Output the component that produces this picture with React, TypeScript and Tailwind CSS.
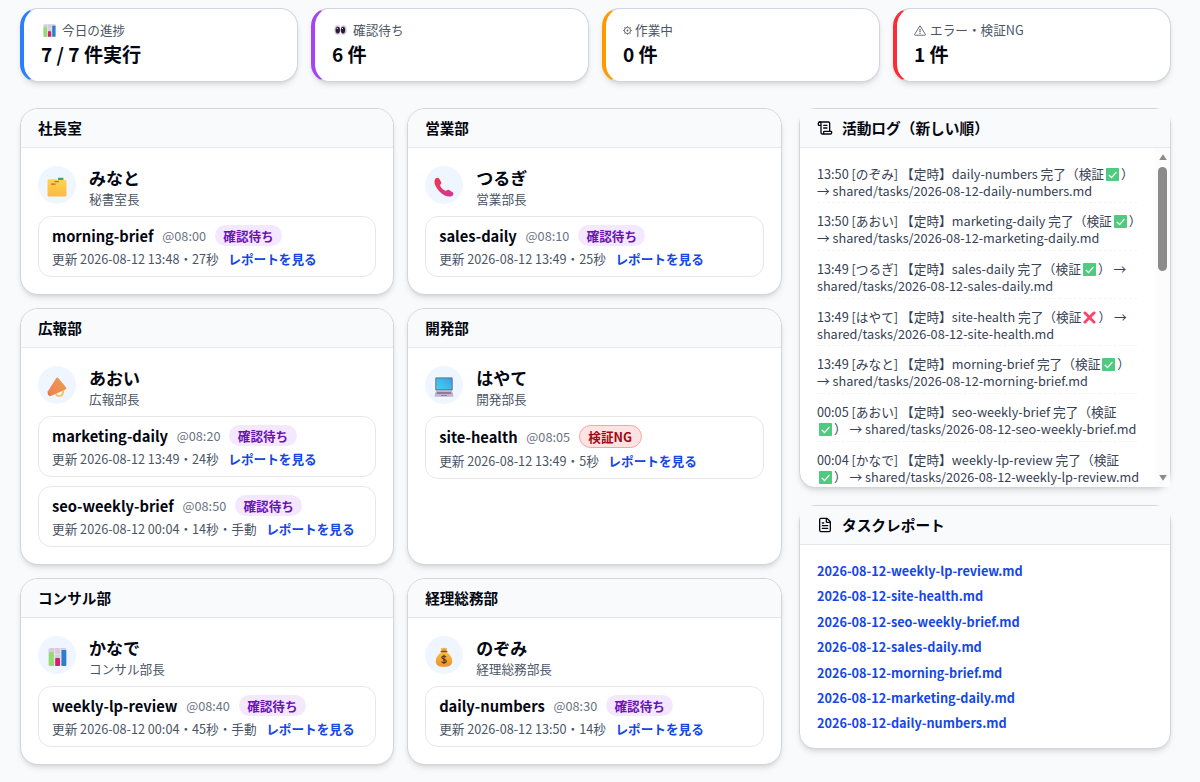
import type { ReactNode } from "react"
import { FileText, ScrollText } from "lucide-react"

type Task = {
  name: string
  time: string
  status: "wait" | "ng"
  meta: string
}

type Department = {
  title: string
  leader: string
  role: string
  icon: ReactNode
  tasks: Task[]
}

type Log = {
  time: string
  who: string
  task: string
  ok: boolean
  // where the entry wraps onto its second line
  wrap: "mark" | "arrow" | "path"
}

function ChartIcon({ className }: { className: string }) {
  return (
    <svg viewBox="0 0 20 20" className={className}>
      <rect x="0.5" y="0.5" width="19" height="19" rx="2" fill="#d5cbdc" />
      <path d="M0.5 7h19M0.5 13h19M7 0.5v19M13 0.5v19" stroke="#efe9f2" strokeWidth="0.8" />
      <rect x="1" y="5" width="5" height="14.5" rx="0.8" fill="#8ee06b" />
      <rect x="7.6" y="11" width="5" height="8.5" rx="0.8" fill="#d4216b" />
      <rect x="14.2" y="2.5" width="5" height="17" rx="0.8" fill="#2880cf" />
    </svg>
  )
}

function EyesIcon({ className }: { className: string }) {
  return (
    <svg viewBox="0 0 20 16" className={className}>
      <ellipse cx="5" cy="8" rx="4.9" ry="7.6" fill="#d3c6df" />
      <ellipse cx="15" cy="8" rx="4.9" ry="7.6" fill="#d3c6df" />
      <ellipse cx="5.6" cy="8" rx="3.5" ry="5.4" fill="#2b1c35" />
      <ellipse cx="14" cy="8" rx="3.5" ry="5.4" fill="#2b1c35" />
      <circle cx="4.7" cy="5.4" r="0.9" fill="#fff" />
      <circle cx="13.1" cy="5.4" r="0.9" fill="#fff" />
    </svg>
  )
}

function GearIcon() {
  return (
    <svg viewBox="0 0 16 16" className="h-[9px] w-[9px]" fill="none" stroke="#4b5563">
      <circle cx="8" cy="8" r="5.6" strokeWidth="1.6" />
      <circle cx="8" cy="8" r="1.6" fill="#4b5563" stroke="none" />
      <path
        d="M8 0v2M8 14v2M0 8h2M14 8h2M2.3 2.3l1.4 1.4M12.3 12.3l1.4 1.4M2.3 13.7l1.4-1.4M12.3 3.7l1.4-1.4"
        strokeWidth="1.2"
      />
    </svg>
  )
}

function WarningIcon() {
  return (
    <svg viewBox="0 0 24 22" className="h-[11px] w-[12px]" fill="none" stroke="#4b5563" strokeWidth="1.7">
      <path d="M12 1.5 L23 19 Q23 20.5 21.5 20.5 H2.5 Q1 20.5 1 19 Z" strokeLinejoin="round" />
      <path d="M12 7.5v7M12 16v2" strokeWidth="2" />
    </svg>
  )
}

function FolderIcon() {
  return (
    <svg viewBox="0 0 20 20" className="h-[20px] w-[20px]">
      <defs>
        <linearGradient id="folder" x1="0" y1="0" x2="0" y2="1">
          <stop offset="0" stopColor="#ffd64a" />
          <stop offset="1" stopColor="#fbb845" />
        </linearGradient>
      </defs>
      <path d="M11 .8h5.4v2.6H11z" fill="#3aa774" />
      <path d="M0.5 4Q0.5 2.2 2 2.2H10L11 3H18Q19.5 3 19.5 4.4V18Q19.5 19.5 18 19.5H2Q0.5 19.5 0.5 18Z" fill="url(#folder)" />
      <path d="M4 7.2h4.5" stroke="#e8542f" strokeWidth="1.2" />
      <path d="M7.5 4.6h4.4" stroke="#4b9a8e" strokeWidth="1.2" />
    </svg>
  )
}

function PhoneIcon() {
  return (
    <svg viewBox="0 0 20 20" className="h-[20px] w-[20px]">
      <defs>
        <linearGradient id="phone" x1="0" y1="0" x2="1" y2="1">
          <stop offset="0" stopColor="#f0364f" />
          <stop offset="1" stopColor="#d0379a" />
        </linearGradient>
      </defs>
      <path
        d="M1.6 1.6C2.5.4 4.3.3 5.1 1.6L7.1 4.9C7.6 5.8 7.3 6.8 6.4 7.5C6 7.9 6 8.4 6.3 9C7.4 11 9 12.6 11.2 13.7C11.7 14 12.2 13.9 12.6 13.5C13.3 12.8 14.2 12.6 15 13.1L18.6 15.2C19.8 16 19.8 17.5 18.6 18.4C16.6 20 13.6 19.9 10.8 18.4C6.5 16.2 2.9 12.1 1.1 8C.1 5.6.2 3.2 1.6 1.6Z"
        fill="url(#phone)"
      />
    </svg>
  )
}

function MegaphoneIcon() {
  return (
    <svg viewBox="0 0 20 20" className="h-[20px] w-[20px]">
      <defs>
        <linearGradient id="mega" x1="0" y1="1" x2="1" y2="0">
          <stop offset="0" stopColor="#f57c55" />
          <stop offset="1" stopColor="#e9a04b" />
        </linearGradient>
      </defs>
      <path d="M9 16.4c1 3.4 5.8 3.6 7-.4l.2-2.4" fill="none" stroke="#f6c04f" strokeWidth="1.7" />
      <path d="M9.2 1.2Q10.3 0 11.4 1.2L19.2 10.6Q19.8 11.8 18.6 12.4L3.2 19.3Q.6 17.6.6 14.8Z" fill="url(#mega)" />
      <path d="M.8 14.4Q3 15.6 3.4 19.2L1.8 18.6Q.2 16.8.8 14.4Z" fill="#d97c35" />
    </svg>
  )
}

function LaptopIcon() {
  return (
    <svg viewBox="0 0 20 20" className="h-[20px] w-[20px]">
      <defs>
        <linearGradient id="screen" x1="0" y1="1" x2="1" y2="0">
          <stop offset="0" stopColor="#3fd5f2" />
          <stop offset="1" stopColor="#3d9fe5" />
        </linearGradient>
      </defs>
      <rect x="1.4" y="0.4" width="17.2" height="13" rx="1" fill="#57506b" />
      <rect x="2.2" y="1.2" width="15.6" height="11.4" rx="0.4" fill="url(#screen)" />
      <path d="M2 13.5h16l1.6 5.2Q19.6 19.8 18.6 19.8H1.4Q.4 19.8.4 18.7Z" fill="#c3b6cd" />
      <path d="M3 15h14l.6 2H2.4Z" fill="#8a7d9b" />
      <path d="M7 18h6v1H7z" fill="#8f829e" />
    </svg>
  )
}

function MoneyIcon() {
  return (
    <svg viewBox="0 0 20 20" className="h-[20px] w-[20px]">
      <defs>
        <linearGradient id="bag" x1="0" y1="0" x2="0" y2="1">
          <stop offset="0" stopColor="#fcc03c" />
          <stop offset="1" stopColor="#ee8f2d" />
        </linearGradient>
      </defs>
      <path d="M7 .8L8.6 1.4 10 .4 11.4 1.4 13 .8 12.4 4.2H7.6Z" fill="#f2a531" />
      <path d="M7.6 4.8H12.4C15.6 7 18.2 10.6 18.2 14.4C18.2 18 15.4 19.8 10 19.8S1.8 18 1.8 14.4C1.8 10.6 4.4 7 7.6 4.8Z" fill="url(#bag)" />
      <path d="M7.2 4.5h5.6" stroke="#8a4a28" strokeWidth="1.3" strokeLinecap="round" />
      <path
        d="M12.2 10.2C11.7 9.3 10.9 9 10 9C8.8 9 7.9 9.6 7.9 10.6C7.9 12.8 12.3 11.8 12.3 14.1C12.3 15.2 11.2 15.8 10 15.8C8.9 15.8 8 15.3 7.6 14.4M10 7.8V17"
        fill="none"
        stroke="#5d3426"
        strokeWidth="1.2"
      />
    </svg>
  )
}

function ResultMark({ ok }: { ok: boolean }) {
  return (
    <span className="inline-flex h-[13px] w-[17px] items-center justify-center align-[-2px]">
      {ok ? (
        <svg viewBox="0 0 14 14" className="h-[13px] w-[13px]">
          <rect width="14" height="14" rx="0.8" fill="#4fcb7f" />
          <path d="M3 7.4l2.9 2.9L11.2 4.4" fill="none" stroke="#fff" strokeWidth="1.4" />
        </svg>
      ) : (
        <svg viewBox="0 0 14 14" className="h-[13px] w-[13px]">
          <path d="M2 2l10 10M12 2L2 12" stroke="#f8436b" strokeWidth="3" strokeLinecap="round" />
        </svg>
      )}
    </span>
  )
}

const stats = [
  { label: "今日の進捗", value: "7 / 7 件実行", border: "border-l-[#2b7fff]", gap: "gap-[6px]", icon: <ChartIcon className="ml-[2px] h-[13px] w-[13px]" /> },
  { label: "確認待ち", value: "6 件", border: "border-l-[#a445f5]", gap: "gap-[6px]", icon: <EyesIcon className="ml-[2px] h-[10px] w-[13px]" /> },
  { label: "作業中", value: "0 件", border: "border-l-[#fe9a00]", gap: "gap-[3px]", icon: <GearIcon /> },
  { label: "エラー・検証NG", value: "1 件", border: "border-l-[#fb2c36]", gap: "gap-[4px]", icon: <WarningIcon /> },
]

const departments: Department[] = [
  {
    title: "社長室",
    leader: "みなと",
    role: "秘書室長",
    icon: <FolderIcon />,
    tasks: [{ name: "morning-brief", time: "@08:00", status: "wait", meta: "更新 2026-08-12 13:48・27秒" }],
  },
  {
    title: "営業部",
    leader: "つるぎ",
    role: "営業部長",
    icon: <PhoneIcon />,
    tasks: [{ name: "sales-daily", time: "@08:10", status: "wait", meta: "更新 2026-08-12 13:49・25秒" }],
  },
  {
    title: "広報部",
    leader: "あおい",
    role: "広報部長",
    icon: <MegaphoneIcon />,
    tasks: [
      { name: "marketing-daily", time: "@08:20", status: "wait", meta: "更新 2026-08-12 13:49・24秒" },
      { name: "seo-weekly-brief", time: "@08:50", status: "wait", meta: "更新 2026-08-12 00:04・14秒・手動" },
    ],
  },
  {
    title: "開発部",
    leader: "はやて",
    role: "開発部長",
    icon: <LaptopIcon />,
    tasks: [{ name: "site-health", time: "@08:05", status: "ng", meta: "更新 2026-08-12 13:49・5秒" }],
  },
  {
    title: "コンサル部",
    leader: "かなで",
    role: "コンサル部長",
    icon: <ChartIcon className="h-[20px] w-[19px]" />,
    tasks: [{ name: "weekly-lp-review", time: "@08:40", status: "wait", meta: "更新 2026-08-12 00:04・45秒・手動" }],
  },
  {
    title: "経理総務部",
    leader: "のぞみ",
    role: "経理総務部長",
    icon: <MoneyIcon />,
    tasks: [{ name: "daily-numbers", time: "@08:30", status: "wait", meta: "更新 2026-08-12 13:50・14秒" }],
  },
]

const logs: Log[] = [
  { time: "13:50", who: "のぞみ", task: "daily-numbers", ok: true, wrap: "arrow" },
  { time: "13:50", who: "あおい", task: "marketing-daily", ok: true, wrap: "arrow" },
  { time: "13:49", who: "つるぎ", task: "sales-daily", ok: true, wrap: "path" },
  { time: "13:49", who: "はやて", task: "site-health", ok: false, wrap: "path" },
  { time: "13:49", who: "みなと", task: "morning-brief", ok: true, wrap: "arrow" },
  { time: "00:05", who: "あおい", task: "seo-weekly-brief", ok: true, wrap: "mark" },
  { time: "00:04", who: "かなで", task: "weekly-lp-review", ok: true, wrap: "mark" },
]

const reports = [
  "2026-08-12-weekly-lp-review.md",
  "2026-08-12-site-health.md",
  "2026-08-12-seo-weekly-brief.md",
  "2026-08-12-sales-daily.md",
  "2026-08-12-morning-brief.md",
  "2026-08-12-marketing-daily.md",
  "2026-08-12-daily-numbers.md",
]

function StatusBadge({ status }: { status: Task["status"] }) {
  if (status === "ng") {
    return (
      <span className="rounded-full border border-[#ffa2a2] bg-[#ffe2e2] px-[8.5px] text-[12.6px] leading-[21px] font-semibold text-[#9f0712]">
        検証NG
      </span>
    )
  }
  return (
    <span className="rounded-full bg-[#f3e8ff] px-[8.5px] text-[12.6px] leading-[21px] font-semibold text-[#6e11b0]">
      確認待ち
    </span>
  )
}

function TaskItem({ task }: { task: Task }) {
  return (
    <div className="rounded-[13px] border border-gray-200 px-[13px] pt-[8px] pb-[8px]">
      <div className="flex items-center gap-[8.8px]">
        <span className="text-[14.7px] leading-[21px] font-semibold text-[#030712]">{task.name}</span>
        <span className="text-[12.7px] leading-[21px] text-[#6a7282]">{task.time}</span>
        <StatusBadge status={task.status} />
      </div>
      <div className="mt-[3px] flex gap-[9.5px] text-[12.65px] leading-[19px]">
        <span className="text-[#4a5565]">{task.meta}</span>
        <a href="#" className="font-semibold text-[#1447e6]">
          レポートを見る
        </a>
      </div>
    </div>
  )
}

function DepartmentCard({ dept }: { dept: Department }) {
  return (
    <section className="overflow-hidden rounded-[18px] border border-[#d1d5dc] bg-white shadow-md">
      <h2 className="h-[39px] border-b border-gray-200 bg-[#f9fafb] px-[17px] text-[14.6px] leading-[37px] font-semibold text-[#030712]">
        {dept.title}
      </h2>
      <div className="px-[17px] pt-[17px] pb-[17px]">
        <div className="flex gap-[13px]">
          <div className="mt-[1px] flex h-[38px] w-[38px] items-center justify-center rounded-full bg-[#eff6ff] pt-[4px]">
            {dept.icon}
          </div>
          <div>
            <div className="text-[17px] leading-[25px] font-semibold text-[#030712]">{dept.leader}</div>
            <div className="text-[12.65px] leading-[17px] text-[#4a5565]">{dept.role}</div>
          </div>
        </div>
        <div className="mt-[9px] flex flex-col gap-[9px]">
          {dept.tasks.map((task) => (
            <TaskItem key={task.name} task={task} />
          ))}
        </div>
      </div>
    </section>
  )
}

function LogEntry({ log }: { log: Log }) {
  return (
    <li className="border-b border-dashed border-gray-100 pt-[9px] pb-[3.7px] text-[12.7px] leading-[17px] whitespace-nowrap text-[#364153]">
      {`${log.time} [${log.who}] 【定時】${log.task} 完了（検証`}
      {log.wrap === "mark" && <br />}
      <ResultMark ok={log.ok} />
      {log.wrap === "path" ? "） →" : "）"}
      {log.wrap !== "mark" && <br />}
      {`${log.wrap === "path" ? "" : log.wrap === "mark" ? " → " : "→ "}shared/tasks/2026-08-12-${log.task}.md`}
    </li>
  )
}

export default function App() {
  return (
    <div className="h-[782px] overflow-hidden bg-[#f9fafb] pt-[8px] pr-[29px] pl-[20px] font-['Noto_Sans_CJK_JP',sans-serif]">
      {/* Stats */}
      <div className="grid grid-cols-4 gap-[13px]">
        {stats.map((stat) => (
          <div
            key={stat.label}
            className={`h-[74px] rounded-[18px] border border-l-4 border-[#d1d5dc] bg-white px-[17px] pt-[12px] shadow-md ${stat.border}`}
          >
            <div className={`flex items-center text-[12.65px] leading-[18px] text-[#4a5565] ${stat.gap}`}>
              {stat.icon}
              {stat.label}
            </div>
            <div className="text-[19.1px] leading-[30px] font-semibold text-[#030712]">{stat.value}</div>
          </div>
        ))}
      </div>

      <div className="mt-[26px] flex items-start gap-[17.4px]">
        {/* Departments */}
        <div className="grid w-[761.6px] shrink-0 grid-cols-2 gap-x-[12.7px] gap-y-[13px]">
          {departments.map((dept) => (
            <DepartmentCard key={dept.title} dept={dept} />
          ))}
        </div>

        <div className="flex min-w-0 flex-1 flex-col gap-[17px]">
          {/* Activity log */}
          <section className="rounded-[16px] border border-[#d1d5dc] bg-white shadow-md">
            <h2 className="flex h-[39px] items-center gap-[9px] border-b border-gray-200 bg-[#f9fafb] px-[17px] text-[14.7px] font-semibold text-[#030712]">
              <ScrollText className="h-[16px] w-[16px]" />
              活動ログ（新しい順）
            </h2>
            <div className="flex h-[339px]">
              <ul className="min-w-0 flex-1 overflow-hidden pt-[7.6px] pr-[18px] pl-[17px]">
                {logs.map((log) => (
                  <LogEntry key={log.task} log={log} />
                ))}
              </ul>
              {/* Scrollbar */}
              <div className="flex w-[15px] flex-col items-center bg-[#fcfcfc] pt-[6px] pb-[6px]">
                <svg viewBox="0 0 8 6" className="h-[6px] w-[8px]">
                  <path d="M4 0.3L7.8 6H.2Z" fill="#8b8b8b" />
                </svg>
                <div className="mt-[7px] h-[104px] w-[9px] rounded-full bg-[#8b8b8b]" />
                <svg viewBox="0 0 8 6" className="mt-auto h-[6px] w-[8px]">
                  <path d="M4 5.7L7.8 0H.2Z" fill="#8b8b8b" />
                </svg>
              </div>
            </div>
          </section>

          {/* Reports */}
          <section className="rounded-[16px] border border-[#d1d5dc] bg-white shadow-md">
            <h2 className="flex h-[39px] items-center gap-[9px] border-b border-gray-200 bg-[#f9fafb] px-[17px] text-[14.7px] font-semibold text-[#030712]">
              <FileText className="h-[16px] w-[16px]" />
              タスクレポート
            </h2>
            <ul className="px-[17px] pt-[13px] pb-[12px] text-[12.7px] leading-[25.4px] font-semibold text-[#1447e6]">
              {reports.map((report) => (
                <li key={report}>
                  <a href="#">{report}</a>
                </li>
              ))}
            </ul>
          </section>
        </div>
      </div>
    </div>
  )
}
